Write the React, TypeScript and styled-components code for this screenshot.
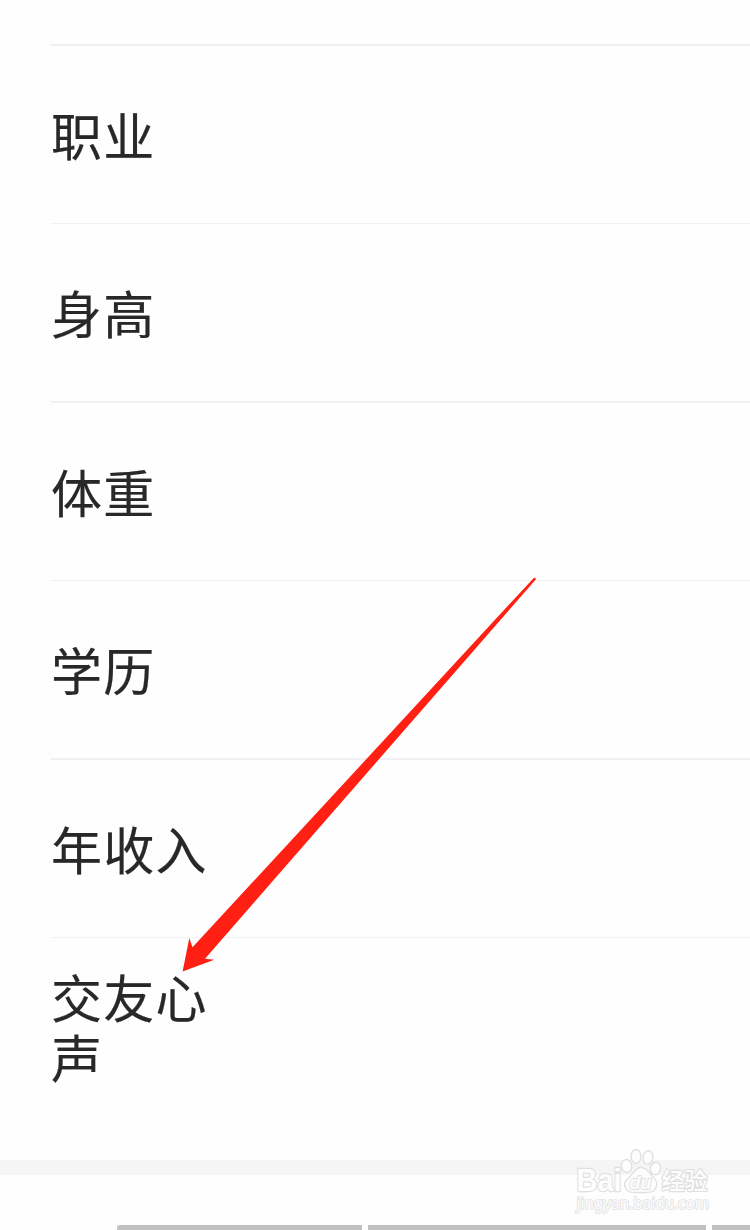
import React from "react";
import styled, { createGlobalStyle } from "styled-components";

const GlobalStyle = createGlobalStyle`
  html, body { margin: 0; background: #fefefe; overflow: hidden; }
  * { box-sizing: border-box; }
`;

const Page = styled.main`
  position: relative;
  display: flex;
  flex-direction: column;
  width: 750px;
  height: 1230px;
  padding-top: 44px;
  overflow: hidden;
  background: #fefefe;
  color: #282828;
  font-family: "Noto Sans CJK SC", sans-serif;
`;

const Fields = styled.section`
  flex: none;
  height: 1116px;
  padding-left: 51px;
`;

const Field = styled.div<{ $height: number; $rule: number }>`
  display: flex;
  align-items: center;
  height: ${(p) => p.$height}px;
  padding-bottom: 1px;
  border-top: ${(p) => p.$rule}px solid ${(p) => (p.$rule > 1 ? "#f0f0f0" : "#f2f2f2")};
`;

const LongField = styled(Field)`
  align-items: flex-start;
  padding-top: 28px;
`;

const Label = styled.span`
  width: 160px;
  font-size: 51px;
  letter-spacing: 1.2px;
  line-height: 60px;
  -webkit-text-stroke: 0.2px #282828;
`;

const Band = styled.div`
  flex: none;
  height: 15px;
  background: #f5f5f5;
`;

const Footer = styled.footer`
  display: flex;
  flex: 1;
  align-items: flex-end;
  gap: 6px;
  padding-left: 117px;
`;

const Segment = styled.div<{ $width: number; $first?: boolean }>`
  flex: none;
  width: ${(p) => p.$width}px;
  height: 5px;
  background: #c1c1c1;
  border-top-left-radius: ${(p) => (p.$first ? 3 : 0)}px;
`;

const Arrow = styled.svg`
  position: absolute;
  left: 0;
  top: 0;
  pointer-events: none;
`;

const Watermark = styled.svg`
  position: absolute;
  left: 570px;
  top: 1144px;
`;

const fields = [
  { label: "职业", height: 179, rule: 2 },
  { label: "身高", height: 178, rule: 1 },
  { label: "体重", height: 179, rule: 2 },
  { label: "学历", height: 178, rule: 1 },
  { label: "年收入", height: 179, rule: 2 },
];

export default function App() {
  return (
    <Page>
      <GlobalStyle />
      <Fields>
        {fields.map((f) => (
          <Field key={f.label} $height={f.height} $rule={f.rule}>
            <Label>{f.label}</Label>
          </Field>
        ))}
        <LongField $height={223} $rule={1}>
          <Label>交友心声</Label>
        </LongField>
      </Fields>
      <Band />
      <Footer>
        <Segment $width={245} $first />
        <Segment $width={338} />
        <Segment $width={38} />
      </Footer>
      <Arrow width="750" height="1230" viewBox="0 0 750 1230">
        <path
          d="M182.6 971.5 189.3 938 192.5 947.3 533.3 578.4Q535.2 576.8 536 579.2L205 958.7 214.3 959.8Z"
          fill="#ff2013"
        />
      </Arrow>
      <Watermark width="150" height="76" viewBox="0 0 150 76">
        <g fill="#fdfdfd" stroke="#e0e0e0" strokeWidth="1.4" strokeLinejoin="round">
          <ellipse cx="56.5" cy="22" rx="5.2" ry="6.5" transform="rotate(-10 56.5 22)" />
          <ellipse cx="66" cy="12.5" rx="5" ry="7" />
          <ellipse cx="78" cy="13.5" rx="5" ry="6.7" transform="rotate(8 78 13.5)" />
          <ellipse cx="85.5" cy="24.5" rx="5" ry="6.3" transform="rotate(12 85.5 24.5)" />
          <path d="M71 23.5C77 23.5 79 29 82 32C87 36 88 39 86 43.5C84 49 78 48.5 71 48.5C64 48.5 58 49.5 55.5 44C53 38.5 56 36 60 32.5C64 29 65 23.5 71 23.5Z" />
          <g paintOrder="stroke" strokeWidth="2.4">
            <text x="6.5" y="47" fontFamily="Liberation Sans, sans-serif" fontSize="31" fontWeight="700" textLength="45" lengthAdjust="spacingAndGlyphs">Bai</text>
            <text x="59.5" y="44.5" fontFamily="Liberation Sans, sans-serif" fontSize="19" fontWeight="700" fontStyle="italic" textLength="22" lengthAdjust="spacingAndGlyphs" strokeWidth="1.8">du</text>
            <text x="91.5" y="45" fontFamily="Noto Sans CJK SC, sans-serif" fontSize="23" fontWeight="500">经验</text>
            <text x="6.5" y="65" fontFamily="Noto Sans, sans-serif" fontSize="15.5" textLength="132.5" lengthAdjust="spacingAndGlyphs" strokeWidth="1.6">jingyan.baidu.com</text>
          </g>
        </g>
      </Watermark>
    </Page>
  );
}
